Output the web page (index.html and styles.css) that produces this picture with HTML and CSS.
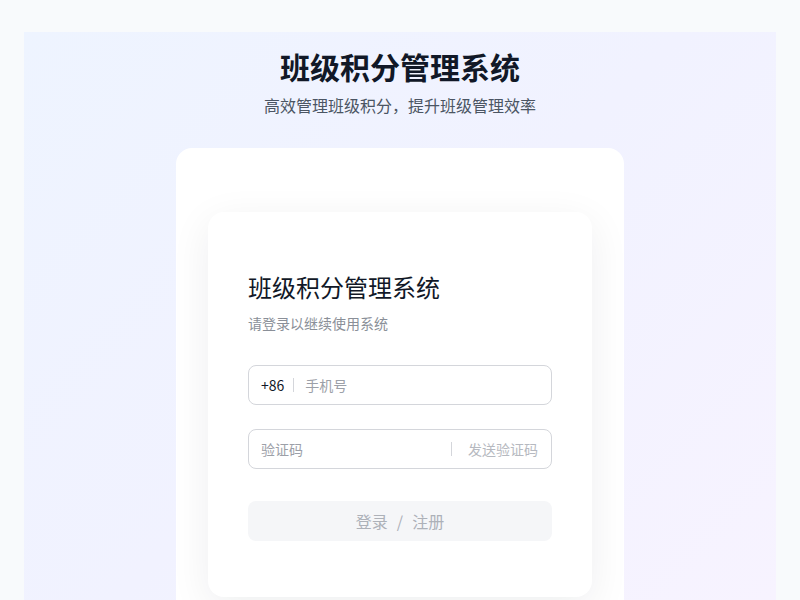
FILE: index.html
```html
<!DOCTYPE html>
<html lang="zh-CN">
<head>
<meta charset="utf-8">
<title>班级积分管理系统</title>
<link rel="stylesheet" href="styles.css">
</head>
<body>
<div class="page">
  <div class="panel">
    <h1 class="title">班级积分管理系统</h1>
    <p class="subtitle">高效管理班级积分，提升班级管理效率</p>
    <div class="outer-card">
      <div class="login-card">
        <h2 class="login-title">班级积分管理系统</h2>
        <p class="login-sub">请登录以继续使用系统</p>
        <div class="field first">
          <span class="prefix">+86</span>
          <span class="divider"></span>
          <span class="placeholder">手机号</span>
        </div>
        <div class="field second">
          <span class="placeholder grow">验证码</span>
          <span class="divider"></span>
          <span class="send">发送验证码</span>
        </div>
        <div class="btn">登录 <span class="slash">/</span> 注册</div>
      </div>
    </div>
  </div>
</div>
</body>
</html>
```

FILE: styles.css
```css
* { box-sizing: border-box; }
html, body { margin: 0; padding: 0; }
body {
  background: #f8fafc;
  font-family: "Noto Sans CJK SC", "Noto Sans", sans-serif;
  height: 600px;
  overflow: hidden;
}
.page { padding: 32px 24px 0; }
.panel {
  background: linear-gradient(135deg, #eef4ff 0%, #f1f2ff 50%, #f7f3ff 100%);
  height: 568px;
  padding-top: 16px;
  display: flex;
  flex-direction: column;
  align-items: center;
  overflow: hidden;
}
.title {
  margin: 0;
  font-size: 30px;
  line-height: 36px;
  font-weight: 700;
  color: #111827;
}
.subtitle {
  margin: 9px 0 0;
  font-size: 16px;
  line-height: 24px;
  color: #4b5563;
}
.outer-card {
  margin-top: 31px;
  width: 448px;
  height: 452px;
  flex-shrink: 0;
  background: #ffffff;
  border-radius: 16px 16px 0 0;
  padding: 64px 32px 0;
}
.login-card {
  background: #fff;
  border-radius: 16px;
  box-shadow: 0 10px 40px rgba(15, 23, 42, 0.07);
  padding: 59px 40px 56px;
}
.login-title {
  margin: 0;
  font-size: 24px;
  line-height: 32px;
  font-weight: 400;
  color: #111827;
}
.login-sub {
  margin: 10px 0 0;
  font-size: 14px;
  line-height: 20px;
  color: #8a8f98;
}
.field {
  height: 40px;
  border: 1px solid #d4d6db;
  border-radius: 8px;
  display: flex;
  align-items: center;
  padding: 0 13px 0 12px;
  font-size: 14px;
}
.field.first { margin-top: 32px; }
.field.second { margin-top: 24px; }
.prefix { color: #111827; }
.divider {
  width: 1px;
  height: 14px;
  background: #d4d6db;
  margin: 0 11px 0 9px;
}
.second .divider { margin: 0 16px 0 0; }
.placeholder { color: #9ca0a8; }
.grow { flex: 1; }
.send { color: #b6b9c0; }
.btn {
  margin-top: 32px;
  height: 40px;
  border-radius: 8px;
  background: #f5f6f8;
  color: #adb1b8;
  font-size: 16px;
  display: flex;
  align-items: center;
  justify-content: center;
}
.slash { margin: 0 9px; }
```
